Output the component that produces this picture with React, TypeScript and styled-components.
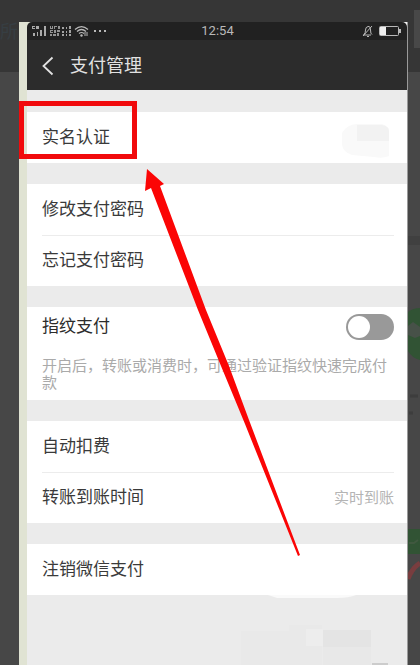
import React from "react";
import styled, { createGlobalStyle } from "styled-components";

const GlobalStyle = createGlobalStyle`
  * { box-sizing: border-box; }
  html, body { margin: 0; padding: 0; }
  body {
    background: #474747;
    font-family: "Liberation Sans", "Noto Sans CJK SC", sans-serif;
    overflow: hidden;
  }
  button, input { font: inherit; margin: 0; }
`;

const Page = styled.div`
  position: relative;
  display: flex;
  min-height: 100vh;
  padding: 22px 12px 0 19px;
  background: linear-gradient(#363636 72px, #474747 72px);
  overflow: hidden;
`;

const GhostText = styled.span`
  position: absolute;
  left: 0;
  top: 22px;
  font-size: 18px;
  line-height: 20px;
  color: #363e43;
`;

const GhostArt = styled.svg`
  position: absolute;
  right: 0;
  top: 0;
`;

const Phone = styled.main`
  position: relative;
  flex: 1;
  min-width: 0;
  border-left: 8px solid #e0e3d3;
  border-right: 1px solid #9a9a9a;
  background: #ebebeb;
`;

const StatusBack = styled.div`
  background: linear-gradient(90deg, #e0e3d3 50%, #f2f2f2 50%);
`;

const StatusBar = styled.div`
  display: grid;
  grid-template-columns: 1fr auto 1fr;
  align-items: center;
  height: 18px;
  padding: 0 4px 0 5px;
  border-radius: 5px 5px 0 0;
  background: #212121;
  color: #b9b9b9;
`;

const Clock = styled.time`
  font-family: Roboto, sans-serif;
  font-size: 13px;
  line-height: 18px;
`;

const StatusIcons = styled.div`
  display: flex;
  justify-content: flex-end;
`;

const NavBar = styled.header`
  display: flex;
  align-items: center;
  gap: 16px;
  height: 50px;
  padding: 1px 15px 0;
  background: #2c2c2c;
  color: #e2e2e2;
`;

const BackButton = styled.button`
  display: flex;
  padding: 0;
  border: 0;
  background: none;
  color: inherit;
`;

const Title = styled.h1`
  margin: 0;
  font-size: 18px;
  line-height: 24px;
  font-weight: 400;
`;

const Settings = styled.div`
  display: flex;
  flex-direction: column;
  gap: 21px;
  padding-top: 22px;
`;

const Group = styled.section`
  padding: 0 13px 0 15px;
  background: #fff;
`;

const Row = styled.button`
  display: flex;
  align-items: center;
  justify-content: space-between;
  width: 100%;
  height: 51px;
  padding: 0;
  border: 0;
  background: none;
  color: #3a3a3a;
  font-size: 17px;
  line-height: 24px;
  text-align: left;

  & + & { border-top: 1px solid #ececec; }
`;

const Value = styled.span`
  color: #b4b4b4;
  font-size: 15px;
`;

const SwitchRow = styled.label`
  display: flex;
  align-items: center;
  justify-content: space-between;
  height: 40px;
  color: #2c2c2c;
  font-size: 17px;
  line-height: 24px;
`;

const Switch = styled.input`
  appearance: none;
  display: flex;
  align-items: center;
  width: 48px;
  height: 26px;
  padding: 0 2px;
  border-radius: 13px;
  background: #999;

  &::before {
    content: "";
    width: 22px;
    height: 22px;
    border-radius: 50%;
    background: #fff;
  }
  &:checked { justify-content: flex-end; background: #1aad19; }
`;

const Hint = styled.p`
  margin: 0;
  padding: 10px 0 9px;
  color: #aaa;
  font-size: 15px;
  line-height: 17px;
`;

const Smudges = styled.svg`
  display: block;
  margin-left: auto;
`;

const Highlight = styled.div`
  position: absolute;
  left: -8px;
  top: 79px;
  width: 118px;
  height: 58px;
  border: 5px solid #f10a0c;
  pointer-events: none;
`;

const Arrow = styled.svg`
  position: absolute;
  left: 110px;
  top: 140px;
  pointer-events: none;
`;

function SignalIcons() {
  return (
    <svg width="78" height="14" viewBox="0 0 78 14" fill="currentColor" aria-hidden="true">
      <path d="M0 2h3v1H1v1h2v1H0zM4 2h3v3H4zM1 9h2v3H1zM5 8h1v4H5zM8 6h2v6H8zM12 2h2v10h-2z" opacity=".9" />
      <path d="M18 2h1v2h1V2h1v3h-3zM22 2h3v1h-2v2h-1zM26 2h2v3h-2zM18 6h3v1h-2v1h2v1h-3zM22 6h2v3h-2zM25 6h3v2h-3zM18 10h2v2h-2zM21 10h3v2h-3zM25 9h2v3h-2z" opacity=".75" />
      <path d="M30 3h2v2h-2zM30 7h2v2h-2zM30 10h2v2h-2zM34 3h1v2h-1zM34 7h1v2h-1zM34 10h1v2h-1zM37 2h2v3h-2zM37 6h2v3h-2zM37 10h2v2h-2z" opacity=".85" />
      <g fill="none" stroke="currentColor" strokeWidth="1.2">
        <path d="M43 5.5Q49.500 -.3 56 5.500M45 7.500Q49.500 3.500 54 7.500M47 9.500Q49.500 7.500 52 9.500" />
        <path d="M53 8v4M55 8v4" strokeWidth="1" />
      </g>
      <circle cx="49.500" cy="11.500" r="1.200" />
      <path d="M62 6h2v2h-2zM67 6h2v2h-2zM72 6h2v2h-2z" />
    </svg>
  );
}

function BellBattery() {
  return (
    <svg width="41" height="14" viewBox="0 0 41 14" fill="none" stroke="currentColor" aria-hidden="true">
      <path d="M1 11h8M2 10.500Q3.500 9 3.500 6T6 2.500T8.500 6T10 10.500M1 12L10 2M5 12.500h2" strokeWidth="1" />
      <rect x="17.500" y="2.500" width="19" height="9" rx="1" />
      <path d="M18 3h6v8h-6z" fill="#eee" stroke="none" />
      <path d="M38 5v4" strokeWidth="2" />
    </svg>
  );
}

function RedactedName() {
  return (
    <svg width="56" height="42" viewBox="0 0 56 42" aria-hidden="true">
      <path d="M4 16Q9 7 20 7H44Q51 9 51 16V39Q44 42 36 40L14 38Q5 35 4 28Z" fill="#f9f9f9" />
      <path d="M19 8L44 8Q51 9 51 14V24H19Z" fill="#f2f2f2" />
    </svg>
  );
}

export default function App() {
  return (
    <>
      <GlobalStyle />
      <Page>
        <GhostText aria-hidden="true">所</GhostText>
        <GhostArt width="12" height="665" viewBox="0 0 12 665" aria-hidden="true">
          <path d="M6 10h6v38H6z" fill="#484848" />
          <path d="M0 236h12v9H0z" fill="#404040" />
          <path d="M0 312Q5 308 12 308V360Q4 358 0 351Z" fill="#315334" />
          <path d="M0 326l5-4 7 5v9l-5 2-7-3Z" fill="#475148" />
          <path d="M2 396h8M1 413h4" stroke="#3d3d3d" strokeWidth="3" />
          <path d="M0 529h12v25H0z" fill="#315334" />
          <path d="M1 543h5l4-3" stroke="#40583f" strokeWidth="2" fill="none" />
          <path d="M0 579Q4 568 12 563" stroke="#793d3f" strokeWidth="5" fill="none" />
        </GhostArt>
        <Phone>
          <StatusBack>
            <StatusBar>
              <SignalIcons />
              <Clock>12:54</Clock>
              <StatusIcons><BellBattery /></StatusIcons>
            </StatusBar>
          </StatusBack>
          <NavBar>
            <BackButton type="button" aria-label="返回">
              <svg width="12" height="20" viewBox="0 0 12 20" fill="none" stroke="currentColor" strokeWidth="1.800">
                <path d="M10.500 1.500L1.500 10l9 8.500" />
              </svg>
            </BackButton>
            <Title>支付管理</Title>
          </NavBar>
          <Settings>
            <Group>
              <Row type="button">实名认证<RedactedName /></Row>
            </Group>
            <Group>
              <Row type="button">修改支付密码</Row>
              <Row type="button">忘记支付密码</Row>
            </Group>
            <Group>
              <SwitchRow>
                指纹支付
                <Switch type="checkbox" role="switch" aria-describedby="fingerprint-hint" />
              </SwitchRow>
              <Hint id="fingerprint-hint">开启后，转账或消费时，可通过验证指纹快速完成付款</Hint>
            </Group>
            <Group>
              <Row type="button">自动扣费</Row>
              <Row type="button">转账到账时间<Value>实时到账</Value></Row>
            </Group>
            <Group>
              <Row type="button">注销微信支付</Row>
            </Group>
          </Settings>
          <Smudges width="170" height="70" viewBox="0 0 170 70" aria-hidden="true">
            <path d="M31 0H119Q112 3 100 3H40Z" fill="#fafafa" />
            <path d="M4 36H52V30H85V70H4Z" fill="#e9e9e9" />
            <path d="M69 34H86V51H69Z" fill="#ededed" />
            <path d="M86 35H134V52H86Z" fill="#e4e4e4" />
            <path d="M86 52H134V70H86Z" fill="#e8e8e8" />
            <path d="M135 68H151V70H135Z" fill="#ccc" />
          </Smudges>
          <Highlight />
          <Arrow width="170" height="400" viewBox="137 162 170 400" aria-hidden="true">
            <path d="M147 169L164 184L160 186L206 310L229 366L249 420L300 555L298 556L245 424L221 366L198 310L151 188L145 191Z" fill="#fb0505" />
          </Arrow>
        </Phone>
      </Page>
    </>
  );
}
